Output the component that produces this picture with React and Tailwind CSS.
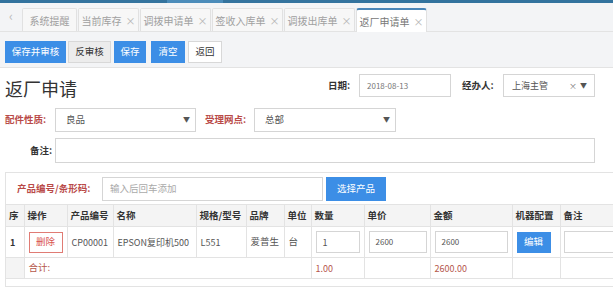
import React from 'react';

const tabs = [
  { name: '系统提醒', w: 'w-[55px]', close: false },
  { name: '当前库存', w: 'w-[61px]', close: true },
  { name: '调拨申请单', w: 'w-[71px]', close: true },
  { name: '签收入库单', w: 'w-[71px]', close: true },
  { name: '调拨出库单', w: 'w-[71px]', close: true },
];

const cols = [
  { t: '序', w: 'w-[18px]' },
  { t: '操作', w: 'w-[43px]' },
  { t: '产品编号', w: 'w-[46px]' },
  { t: '名称', w: 'w-[83px]' },
  { t: '规格/型号', w: 'w-[50px]' },
  { t: '品牌', w: 'w-[38px]' },
  { t: '单位', w: 'w-[27px]' },
  { t: '数量', w: 'w-[53px]' },
  { t: '单价', w: 'w-[66px]' },
  { t: '金额', w: 'w-[82px]' },
  { t: '机器配置', w: 'w-[48px]' },
  { t: '备注', w: 'w-[80px]' },
];

function Caret() {
  return <span className="text-[7px] text-[#555]">▼</span>;
}

export default function App() {
  return (
    <div
      className="w-[613px] h-[287px] overflow-hidden bg-white text-[9.5px] text-[#333] whitespace-nowrap"
      style={{ fontFamily: '"Noto Sans CJK SC", "Noto Sans", sans-serif' }}
    >
      {/* top strip */}
      <div className="h-[3px] flex">
        <div className="w-[167px] bg-[#33739e]" />
        <div className="w-[56px] bg-[#4b8cba]" />
        <div className="flex-1 bg-[#33739e]" />
      </div>

      {/* tab bar */}
      <div className="h-[29px] bg-[#f3f4f6] flex items-end border-b border-[#e3e3e3]">
        <div className="w-[22px] h-[29px] flex items-center justify-center text-[#bbb] text-[13px] pb-[2px]">‹</div>
        {tabs.map((t) => (
          <div
            key={t.name}
            className={`${t.w} h-[23px] mr-px flex items-center justify-center gap-[4px] bg-[#f7f7f7] border border-b-0 border-[#e1e1e1] rounded-t-[2px] text-[10px] text-[#a0a0a0]`}
          >
            <span>{t.name}</span>
            {t.close && <span className="text-[#b5b5b5] text-[10px]">×</span>}
          </div>
        ))}
        <div className="w-[71px] h-[24px] -mb-px flex items-center justify-center gap-[4px] bg-white border border-b-0 border-[#e1e1e1] border-t-2 border-t-[#4a86b8] rounded-t-[3px] text-[10px] text-[#777]">
          <span>返厂申请单</span>
          <span className="text-[#b5b5b5] text-[10px]">×</span>
        </div>
      </div>

      {/* toolbar */}
      <div className="h-[36px] bg-[#f3f4f6] border-b border-[#e3e3e3] flex items-center pl-[5px] pt-[4px]">
        <button className="h-[22px] w-[61px] bg-[#3c8ee6] text-white text-[9.5px] mr-[2px]">保存并审核</button>
        <button className="h-[22px] w-[43px] bg-[#ececec] border border-[#d8d8d8] text-[#333] text-[9.5px] mr-[3px]">反审核</button>
        <button className="h-[22px] w-[32px] bg-[#3c8ee6] text-white text-[9.5px] mr-[5px]">保存</button>
        <button className="h-[22px] w-[34px] bg-[#3c8ee6] text-white text-[9.5px] mr-[3px]">清空</button>
        <button className="h-[22px] w-[34px] bg-white border border-[#d8d8d8] text-[#333] text-[9.5px]">返回</button>
      </div>

      {/* form */}
      <div className="pl-[5px]">
        <div className="h-[35px] flex items-center">
          <div className="w-[323px] text-[18px] text-[#333] leading-none pt-[4px]">返厂申请</div>
          <div className="w-[31px] font-bold">日期:</div>
          <div className="w-[92px] h-[23px] border border-[#d5d5d5] flex items-center pl-[7px] text-[8px] text-[#777]">2018-08-13</div>
          <div className="w-[52px] pl-[11px] font-bold">经办人:</div>
          <div className="w-[92px] h-[23px] border border-[#d5d5d5] flex items-center pl-[8px] pr-[7px] text-[9px] text-[#555]">
            <span className="flex-1">上海主管</span>
            <span className="text-[8px] text-[#777] mr-[3px]">×</span>
            <Caret />
          </div>
        </div>

        <div className="h-[31px] flex items-center mt-[1px]">
          <div className="w-[50px] font-bold text-[#b94a48]">配件性质:</div>
          <div className="w-[141px] h-[24px] border border-[#d5d5d5] flex items-center pl-[10px] pr-[5px] text-[9.5px] text-[#555]">
            <span className="flex-1">良品</span>
            <Caret />
          </div>
          <div className="w-[58px] pl-[9px] font-bold text-[#b94a48]">受理网点:</div>
          <div className="w-[142px] h-[24px] border border-[#d5d5d5] flex items-center pl-[10px] pr-[5px] text-[9.5px] text-[#555]">
            <span className="flex-1">总部</span>
            <Caret />
          </div>
        </div>

        <div className="h-[31px] flex items-center">
          <div className="w-[50px] pr-[3px] text-right font-bold">备注:</div>
          <div className="w-[540px] h-[25px] border border-[#d5d5d5]" />
        </div>

        {/* products box */}
        <div className="mt-[6px] border border-[#e3e3e3] border-r-0">
          <div className="h-[31px] flex items-center pl-[11px]">
            <div className="w-[85px] font-bold text-[#b94a48]">产品编号/条形码:</div>
            <div className="w-[221px] h-[24px] border border-[#d5d5d5] flex items-center pl-[7px] text-[9.5px] text-[#aaa]">输入后回车添加</div>
            <button className="ml-[3px] w-[60px] h-[24px] bg-[#3c8ee6] text-white text-[9.5px]">选择产品</button>
          </div>

          <table className="table-fixed border-collapse w-[634px] text-[9px] leading-none">
            <thead>
              <tr className="h-[22px] bg-[#f4f4f4]">
                {cols.map((c) => (
                  <th key={c.t} className={`${c.w} border border-[#e3e3e3] border-l-0 text-left font-bold text-[9.5px] text-[#333] px-[3px]`}>
                    {c.t}
                  </th>
                ))}
              </tr>
            </thead>
            <tbody>
              <tr className="h-[31px]">
                <td className="border-r border-b border-[#e3e3e3] font-bold pl-[4px]">1</td>
                <td className="border-r border-b border-[#e3e3e3] pl-[4px]">
                  <div className="w-[34px] h-[21px] border border-[#e07b74] text-[#d9534f] flex items-center justify-center text-[9.5px]">删除</div>
                </td>
                <td className="border-r border-b border-[#e3e3e3] pl-[4px] text-[#555]">CP00001</td>
                <td className="border-r border-b border-[#e3e3e3] pl-[4px] text-[#555]">EPSON复印机500</td>
                <td className="border-r border-b border-[#e3e3e3] pl-[4px] text-[#555]">L551</td>
                <td className="border-r border-b border-[#e3e3e3] pl-[4px] text-[#555] text-[9.5px]">爱普生</td>
                <td className="border-r border-b border-[#e3e3e3] pl-[4px] text-[#555] text-[9.5px]">台</td>
                <td className="border-r border-b border-[#e3e3e3] pl-[4px]">
                  <div className="w-[44px] h-[22px] border border-[#d5d5d5] flex items-center pl-[6px] text-[#555]">1</div>
                </td>
                <td className="border-r border-b border-[#e3e3e3] pl-[4px]">
                  <div className="w-[58px] h-[22px] border border-[#d5d5d5] flex items-center pl-[6px] text-[8px] text-[#555]">2600</div>
                </td>
                <td className="border-r border-b border-[#e3e3e3] pl-[4px]">
                  <div className="w-[73px] h-[22px] border border-[#d5d5d5] flex items-center pl-[6px] text-[8px] text-[#555]">2600</div>
                </td>
                <td className="border-r border-b border-[#e3e3e3] pl-[4px]">
                  <div className="w-[34px] h-[21px] bg-[#3c8ee6] text-white flex items-center justify-center text-[9.5px]">编辑</div>
                </td>
                <td className="border-b border-[#e3e3e3] pl-[3px]">
                  <div className="w-[70px] h-[22px] border border-[#d5d5d5]" />
                </td>
              </tr>
              <tr className="h-[21px] text-[#b5574b]">
                <td className="border-r border-b border-[#e3e3e3] bg-[#f4f4f4]" />
                <td colSpan={6} className="border-r border-b border-[#e3e3e3] pl-[4px] text-[9.5px]">合计:</td>
                <td className="border-r border-b border-[#e3e3e3] pl-[4px]">1.00</td>
                <td className="border-r border-b border-[#e3e3e3]" />
                <td className="border-r border-b border-[#e3e3e3] pl-[4px]">2600.00</td>
                <td className="border-r border-b border-[#e3e3e3]" />
                <td className="border-b border-[#e3e3e3]" />
              </tr>
            </tbody>
          </table>
          <div className="h-[7px]" />
        </div>
      </div>
    </div>
  );
}
